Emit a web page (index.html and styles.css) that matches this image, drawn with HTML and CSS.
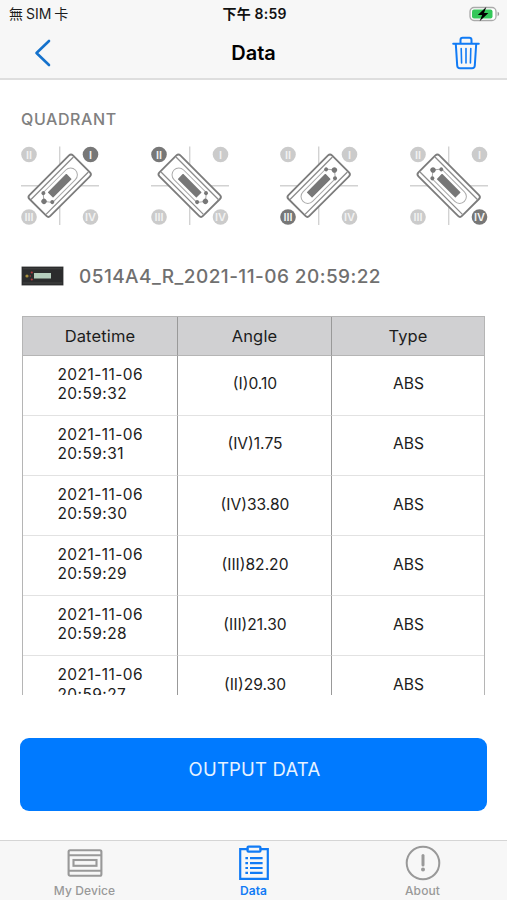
FILE: index.html
```html
<!DOCTYPE html>
<html lang="zh-Hant">
<head>
  <meta charset="UTF-8">
  <meta name="viewport" content="width=device-width, initial-scale=1.0">
  <title>Data</title>
  <link rel="stylesheet" href="styles.css">
</head>
<body>
  <svg class="defs" width="0" height="0">
    <symbol id="device" viewBox="-32 -16 64 32" overflow="visible">
      <rect x="-30.8" y="-14.8" width="61.6" height="29.6" rx="2.8" fill="#fff" stroke="#7c7c7c" stroke-width="1.8"/>
      <path d="M-30 -10.6H30M-30 10.6H30" stroke="#8c8c8c" stroke-width="1.3"/>
      <path d="M-16.8 -6.8H15.4A6.8 6.8 0 0 1 15.4 6.8H-16.8L-22.2 0Z" fill="none" stroke="#aaa" stroke-width="1"/>
      <rect x="-13.2" y="-3.8" width="26.4" height="7.6" rx="0.6" fill="#777"/>
      <circle cx="-22.2" cy="0" r="2.7" fill="#777"/>
      <circle cx="-16.8" cy="-6.3" r="2" fill="#777"/>
      <circle cx="-16.8" cy="6.3" r="2" fill="#777"/>
    </symbol>
  </svg>

  <header>
    <div class="status-bar">
      <span class="carrier">無 SIM 卡</span>
      <span class="time">下午 8:59</span>
      <svg class="battery" width="31" height="16" viewBox="0 0 31 16">
        <rect x="1" y="1.5" width="26" height="13" rx="4" fill="#fff" stroke="#aaa" stroke-width="1.3"/>
        <rect x="3" y="3.5" width="20.5" height="9" rx="2" fill="#34c759"/>
        <path d="M28.6 5.8V10.2Q30.2 9.6 30.2 8T28.6 5.8Z" fill="#999"/>
        <path d="M17.4 0.8L8.8 9H13.2L10.6 15.2L19.4 7H15Z" fill="#000"/>
      </svg>
    </div>
    <div class="nav-bar">
      <button class="back">
        <svg width="18" height="28" viewBox="0 0 18 28">
          <path d="M15 2L2.5 14L15 26" fill="none" stroke="#1572cc" stroke-width="2.6" stroke-linecap="round" stroke-linejoin="round"/>
        </svg>
      </button>
      <h1>Data</h1>
      <button class="trash">
        <svg width="28" height="34" viewBox="0 0 28 34" fill="none" stroke="#117bf5" stroke-width="2" stroke-linecap="round" stroke-linejoin="round">
          <path d="M1.2 7.7H26.8M8.5 7.5V4Q8.5 1.8 10.7 1.8H17.3Q19.5 1.8 19.5 4V7.5"/>
          <path d="M3.8 8L5.2 29.5Q5.4 32.3 8 32.3H20Q22.6 32.3 22.8 29.5L24.2 8"/>
          <path d="M9.2 12.5L9.6 27M14 12.5V27M18.8 12.5L18.4 27" stroke-width="1.6"/>
        </svg>
      </button>
    </div>
  </header>

  <main>
    <h2>QUADRANT</h2>
    <div id="quadrants" class="quadrants"></div>

    <div class="record">
      <svg width="43" height="20" viewBox="0 0 43 20">
        <rect x="0.5" y="0.5" width="42" height="19" rx="1" fill="#2b2c2d" stroke="#aaa"/>
        <path d="M2 2.8H41M2 17H41" stroke="#444"/>
        <rect x="13" y="7" width="17" height="5.5" fill="#b5cdbd"/>
        <circle cx="6" cy="10" r="1.6" fill="#a8903c"/>
        <circle cx="10.8" cy="6.5" r="1.1" fill="#b03a40"/>
        <circle cx="10.8" cy="13.5" r="1.1" fill="#b03a40"/>
        <circle cx="9.3" cy="10" r="0.7" fill="#b03a40"/>
      </svg>
      <span>0514A4_R_2021-11-06 20:59:22</span>
    </div>

    <div class="table">
      <div class="row head"><div>Datetime</div><div>Angle</div><div>Type</div></div>
      <div id="rows"></div>
    </div>

    <button class="output">OUTPUT DATA</button>
  </main>

  <nav class="tab-bar">
    <a class="tab">
      <svg width="36" height="36" viewBox="0 0 36 36" fill="none" stroke="#999" stroke-width="2.1">
        <rect x="1.6" y="5.2" width="32.8" height="25.6" rx="1.5"/>
        <path d="M2 10.3H34M2 25.7H34"/>
        <rect x="6.5" y="15" width="23" height="5.8"/>
      </svg>
      <span>My Device</span>
    </a>
    <a class="tab active">
      <svg width="36" height="36" viewBox="0 0 36 36" fill="none" stroke="#117bf5" stroke-width="2.2">
        <path d="M12.5 4.2H4.2V33.8H31.8V4.2H23.5"/>
        <rect x="11.5" y="1.7" width="13" height="5" rx="1"/>
        <path d="M9.4 13.2H12M14 13.2H26.6M9.4 18.1H12M14 18.1H26.6M9.4 23H12M14 23H26.6M9.4 27.8H12M14 27.8H26.6"/>
      </svg>
      <span>Data</span>
    </a>
    <a class="tab">
      <svg width="36" height="36" viewBox="0 0 36 36" fill="none" stroke="#999" stroke-width="2">
        <circle cx="18" cy="18" r="16.3"/>
        <path d="M18 10.5V20" stroke-width="3" stroke-linecap="round"/>
        <circle cx="18" cy="24.6" r="2" fill="#999" stroke="none"/>
      </svg>
      <span>About</span>
    </a>
  </nav>
  <script src="script.js"></script>
</body>
</html>
```
FILE: styles.css
```css
* {
  box-sizing: border-box;
}
body {
  font-family: Inter, "Noto Sans CJK TC", sans-serif;
  background-color: #fff;
  color: #1c1c1c;
  margin: 0;
  height: 900px;
  display: flex;
  flex-direction: column;
  overflow: hidden;
}
.defs {
  position: absolute;
}
button {
  font-family: inherit;
  background: none;
  border: none;
  padding: 0;
}
svg {
  display: block;
  flex-shrink: 0;
}
header {
  height: 80px;
  background-color: #f7f7f7;
  border-bottom: 2px solid #dedede;
}
.status-bar {
  height: 27px;
  padding: 0 7px 0 9px;
  display: grid;
  grid-template-columns: 1fr auto 1fr;
  align-items: center;
  font-size: 14px;
  line-height: 27px;
}
.carrier {
  word-spacing: -1px;
}
.time {
  font-weight: 600;
  letter-spacing: 0.2px;
  color: #111;
}
.battery {
  justify-self: end;
}
.nav-bar {
  height: 51px;
  padding: 0 27px;
  display: grid;
  grid-template-columns: 1fr auto 1fr;
  align-items: center;
}
h1 {
  margin: 0;
  font-size: 20px;
  font-weight: 600;
  color: #000;
}
.back {
  justify-self: start;
  margin-left: 7px;
}
.trash {
  justify-self: end;
}
main {
  flex: 1;
  padding: 0 20px;
}
h2 {
  margin: 28px 0 0 1px;
  font-size: 16px;
  line-height: 22px;
  font-weight: 500;
  letter-spacing: 0.6px;
  color: #808080;
}
.quadrants {
  display: flex;
  justify-content: space-between;
  margin: 16px -1px 0 1px;
}
.badge {
  fill: #cbcbcb;
}
.badge.on {
  fill: #777;
}
.quadrants text {
  font-size: 11px;
  font-weight: 600;
  fill: #f2f2f2;
  text-anchor: middle;
}
.record {
  display: flex;
  align-items: center;
  gap: 15px;
  height: 28px;
  margin: 36px 0 0 1px;
  font-size: 19px;
  font-weight: 500;
  letter-spacing: 0.44px;
  color: #707070;
}
.table {
  height: 379px;
  margin: 26px 2px 0;
  overflow: hidden;
  border: 1px solid #b5b5b5;
  border-bottom: none;
}
.row {
  display: grid;
  grid-template-columns: 155px 154px 1fr;
  height: 60.1px;
  font-size: 15.6px;
  line-height: 19.3px;
}
.row > div {
  display: flex;
  align-items: center;
  justify-content: center;
  padding: 0 0 3px 1px;
  border-bottom: 1px solid #e2e2e2;
}
.row > div:not(:last-child) {
  border-right: 1.5px solid #999;
}
.row.head {
  height: 39px;
  font-size: 16.5px;
  letter-spacing: 0.15px;
  background-color: #d0d0d2;
}
.row.head > div {
  padding: 1px 0 0;
  border-bottom-color: #b5b5b5;
}
.row .date {
  width: 86px;
  font-size: 15.5px;
  letter-spacing: 0.42px;
  white-space: nowrap;
}
.output {
  display: block;
  width: 100%;
  height: 73px;
  margin-top: 43px;
  padding: 0 0 11px 2px;
  border-radius: 9px;
  background-color: #007aff;
  color: #e6f2ff;
  font-size: 18.5px;
  letter-spacing: 0.2px;
}
.tab-bar {
  display: flex;
  height: 60px;
  background-color: #f7f7f7;
  border-top: 1px solid #d5d5d5;
}
.tab {
  flex: 1;
  display: flex;
  flex-direction: column;
  align-items: center;
  padding-top: 4px;
  font-size: 12px;
  line-height: 20px;
  font-weight: 500;
  letter-spacing: 0.1px;
  color: #999;
}
.tab.active {
  color: #117bf5;
  font-weight: 600;
}
```
FILE: script.js
```js
const quadrants = [
  { name: 'I', x: 69.5, y: 8.5, angle: -45 },
  { name: 'II', x: 8, y: 8.5, angle: 225 },
  { name: 'III', x: 8, y: 71, angle: 135 },
  { name: 'IV', x: 69.5, y: 71, angle: 45 }
];

const readings = [
  ['20:59:32', '(I)0.10'],
  ['20:59:31', '(IV)1.75'],
  ['20:59:30', '(IV)33.80'],
  ['20:59:29', '(III)82.20'],
  ['20:59:28', '(III)21.30'],
  ['20:59:27', '(II)29.30']
];

document.getElementById('quadrants').innerHTML = quadrants.map(active => {
  const badges = quadrants.map(q => `
    <circle class="badge ${q === active ? 'on' : ''}" cx="${q.x}" cy="${q.y}" r="7.8"/>
    <text x="${q.x}" y="${q.y + 4}">${q.name}</text>`).join('');
  return `<svg width="78" height="80" viewBox="0 0 78 80">
    <path d="M38.7 0.5V79M0 39.7H78" stroke="#d2d2d2" stroke-width="1.4"/>
    ${badges}
    <g transform="translate(38.7 39.7) rotate(${active.angle})">
      <use href="#device" x="-32" y="-16" width="64" height="32"/>
    </g>
  </svg>`;
}).join('');

document.getElementById('rows').innerHTML = readings.map(([time, angle]) => `
  <div class="row">
    <div><span class="date">2021-11-06<br>${time}</span></div>
    <div>${angle}</div>
    <div>ABS</div>
  </div>`).join('');
```
